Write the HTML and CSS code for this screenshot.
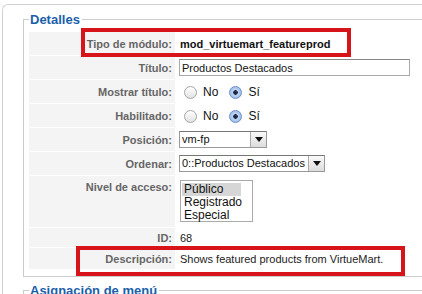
FILE: index.html
```html
<!DOCTYPE html>
<html lang="es">
<head>
  <meta charset="UTF-8">
  <title>Módulo: Editar</title>
  <link rel="stylesheet" href="styles.css">
</head>
<body>
  <div class="panel">
    <fieldset class="group">
      <legend>Detalles</legend>
      <table class="admintable">
        <tr class="r-type">
          <td class="key">Tipo de módulo:</td>
          <td><strong>mod_virtuemart_featureprod</strong></td>
        </tr>
        <tr>
          <td class="key">Título:</td>
          <td><input class="text" type="text" value="Productos Destacados"></td>
        </tr>
        <tr>
          <td class="key">Mostrar título:</td>
          <td>
            <span class="radio"></span><span class="opt">No</span>
            <span class="radio on"></span><span class="opt">Sí</span>
          </td>
        </tr>
        <tr>
          <td class="key">Habilitado:</td>
          <td>
            <span class="radio"></span><span class="opt">No</span>
            <span class="radio on"></span><span class="opt">Sí</span>
          </td>
        </tr>
        <tr>
          <td class="key">Posición:</td>
          <td><div class="select sel-pos"><span class="val">vm-fp</span><span class="btn"></span></div></td>
        </tr>
        <tr>
          <td class="key">Ordenar:</td>
          <td><div class="select sel-ord"><span class="val">0::Productos Destacados</span><span class="btn"></span></div></td>
        </tr>
        <tr class="r-access">
          <td class="key">Nivel de acceso:</td>
          <td>
            <div class="listbox">
              <div class="item sel">Público</div>
              <div class="item">Registrado</div>
              <div class="item">Especial</div>
            </div>
          </td>
        </tr>
        <tr class="r-id">
          <td class="key">ID:</td>
          <td>68</td>
        </tr>
        <tr class="r-desc">
          <td class="key">Descripción:</td>
          <td>Shows featured products from VirtueMart.</td>
        </tr>
      </table>
    </fieldset>
    <fieldset class="group next">
      <legend>Asignación de menú</legend>
    </fieldset>

    <!-- red annotation boxes -->
    <div class="mark mark-type"></div>
    <div class="mark mark-desc"></div>
  </div>
</body>
</html>
```

FILE: styles.css
```css
    body {
      margin: 0;
      font-family: "Liberation Sans", Arial, sans-serif;
      font-size: 11px;
      background-color: #fff;
      overflow: hidden;
    }

    .panel {
      position: relative;
      margin: 4px 0 0 2px;
      border: 1px solid #d2d2d2;
      border-right: none;
      border-radius: 6px 0 0 0;
      padding: 0 0 40px 20px;
    }

    fieldset.group {
      margin: 7px 0 0 0;
      border: 1px solid #cccccc;
      border-right: none;
      padding: 0 0 6px 4px;
    }

    fieldset.group legend {
      font-size: 13px;
      line-height: 15px;
      font-weight: bold;
      color: #1b5fab;
      padding: 0 2px 0 1px;
      margin-left: 1px;
    }

    fieldset.next {
      margin-top: 6px;
      height: 30px;
    }

    table.admintable {
      border-collapse: separate;
      border-spacing: 1px;
      margin-top: 4px;
    }

    table.admintable td {
      height: 23px;
      padding: 0 0 0 4px;
      color: #222;
      vertical-align: middle;
    }

    table.admintable td.key {
      width: 139px;
      padding: 0 3px 0 4px;
      background-color: #f4f4f4;
      color: #666;
      font-weight: bold;
      text-align: right;
    }

    table.admintable strong {
      color: #111;
    }

    tr.r-access td { height: 46px; vertical-align: top; }
    tr.r-access td.key { padding-top: 5px; }
    tr.r-id td { height: 19px; }
    tr.r-desc td { height: 21px; }

    input.text {
      width: 231px;
      height: 17px;
      box-sizing: border-box;
      margin: 0 0 0 -1px;
      padding: 0 2px;
      border: 1px solid #aaa;
      border-top-color: #888;
      font-family: "Liberation Sans", Arial, sans-serif;
      font-size: 11px;
      color: #111;
    }

    .radio {
      display: inline-block;
      width: 13px;
      height: 13px;
      box-sizing: border-box;
      border: 1px solid #a4a4a4;
      border-radius: 50%;
      background: linear-gradient(#ffffff, #e2e2e2);
      vertical-align: -3px;
      margin-left: 4px;
    }

    .radio.on {
      margin-left: 8px;
      border-color: #6d8fbf;
      background: radial-gradient(circle, #1d2b44 0, #1d2b44 2px, #bcd4f2 2.5px, #8fb3e4 100%);
    }

    .opt {
      margin-left: 6px;
      font-size: 12px;
      color: #111;
    }

    .select {
      display: flex;
      height: 17px;
      box-sizing: border-box;
      margin-left: -1px;
      border: 1px solid #999;
      border-top-color: #777;
      background-color: #fff;
      font-size: 11px;
      color: #111;
    }

    .sel-pos { width: 88px; }
    .sel-ord { width: 146px; }

    .select .val {
      flex: 1;
      padding-left: 2px;
      line-height: 15px;
      white-space: nowrap;
      overflow: hidden;
    }

    .select .btn {
      position: relative;
      width: 15px;
      border-left: 1px solid #aaa;
      background: linear-gradient(#fafafa, #dcdcdc);
    }

    .select .btn::after {
      content: "";
      position: absolute;
      left: 4px;
      top: 5px;
      border-left: 4px solid transparent;
      border-right: 4px solid transparent;
      border-top: 5px solid #111;
    }

    .listbox {
      width: 73px;
      height: 42px;
      box-sizing: border-box;
      margin-top: 4px;
      padding: 2px 11px 0 1px;
      border: 1px solid #aaa;
      font-size: 12px;
      line-height: 13px;
      color: #111;
    }

    .listbox .item {
      padding-left: 2px;
    }

    .listbox .item.sel {
      background-color: #d6d6d6;
    }

    .mark {
      position: absolute;
      box-sizing: border-box;
      border: 4px solid #d8141b;
    }

    .mark-type {
      left: 78px;
      top: 23px;
      width: 270px;
      height: 29px;
    }

    .mark-desc {
      left: 73px;
      top: 241px;
      width: 329px;
      height: 30px;
    }
```
